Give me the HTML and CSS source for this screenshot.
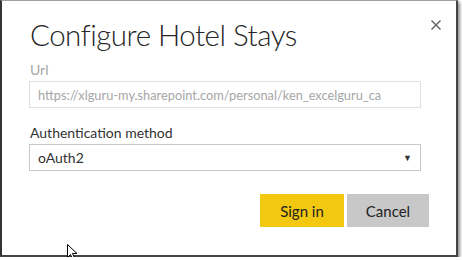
FILE: index.html
```html
<!DOCTYPE html>
<html lang="en">
<head>
  <meta charset="UTF-8">
  <title>Configure Hotel Stays</title>
  <link rel="stylesheet" href="styles.css">
</head>
<body>
  <div class="dialog">
    <button class="close" aria-label="Close">
      <svg width="10" height="10" viewBox="0 0 10 10"><path d="M0.5 0.5 L9.5 9.5 M9.5 0.5 L0.5 9.5" stroke="#666" stroke-width="1.5"/></svg>
    </button>
    <h1 class="title">Configure Hotel Stays</h1>

    <div class="field">
      <label class="label disabled" for="url">Url</label>
      <input class="text-input" type="text" id="url" placeholder="https://xlguru-my.sharepoint.com/personal/ken_excelguru_ca" disabled>
    </div>

    <div class="field">
      <label class="label" for="auth">Authentication method</label>
      <div class="select" id="auth">
        <span>oAuth2</span>
        <span class="arrow">&#9660;</span>
      </div>
    </div>

    <div class="actions">
      <button class="btn primary">Sign in</button>
      <button class="btn secondary">Cancel</button>
    </div>

    <!-- mouse pointer left in the screenshot -->
    <svg class="cursor" width="14" height="18" viewBox="0 0 14 18">
      <path d="M0.5 0.5 L0.5 13.5 L3.5 10.5 L6 16 L8 15 L5.5 9.5 L10 9.5 Z" fill="#fff" stroke="#000" stroke-width="1"/>
    </svg>
  </div>
</body>
</html>
```

FILE: styles.css
```css
body {
  margin: 0;
  background: #fff;
  font-family: "Lato", "Open Sans", sans-serif;
}

.dialog {
  position: relative;
  box-sizing: border-box;
  width: 458px;
  height: 257px;
  padding: 15px 35px 0 27px;
  background: #fff;
  border-top: 1px solid #a0a0a0;
  border-left: 2px solid #333;
  border-right: 2px solid #444;
  border-bottom: 2px solid #444;
  box-shadow: 2px 2px 3px rgba(0, 0, 0, 0.45);
}

.close {
  position: absolute;
  top: 17px;
  right: 15px;
  padding: 0;
  border: none;
  background: none;
}

.title {
  margin: 0 0 7px 1px;
  font-size: 29.5px;
  font-weight: 300;
  letter-spacing: -0.5px;
  line-height: 38px;
  color: #252525;
}

.field {
  margin-bottom: 16px;
}

.label {
  display: block;
  margin: 0 0 2px 1px;
  font-size: 14px;
  line-height: 18px;
  color: #333;
}

.label.disabled {
  color: #a6a6a6;
}

.text-input,
.select {
  box-sizing: border-box;
  width: 100%;
  height: 27px;
  border: 1px solid #e0e0e0;
  padding: 0 8px;
  font-family: inherit;
  font-size: 14px;
  background: #fff;
}

.text-input {
  font-size: 12.8px;
}

.text-input::placeholder {
  color: #a6a6a6;
}

.select {
  display: flex;
  align-items: center;
  justify-content: space-between;
  border-color: #c8c8c8;
  color: #333;
}

.arrow {
  font-size: 9px;
  color: #333;
}

.actions {
  display: flex;
  justify-content: flex-end;
  gap: 3px;
  margin-top: 23px;
  margin-right: -8px;
}

.btn {
  height: 33px;
  border: none;
  font-family: inherit;
  font-size: 15px;
  color: #222;
}

.primary {
  width: 84px;
  background: #f2c811;
}

.secondary {
  width: 82px;
  background: #c8c8c8;
}

.cursor {
  position: absolute;
  left: 65px;
  top: 243px;
}
```
